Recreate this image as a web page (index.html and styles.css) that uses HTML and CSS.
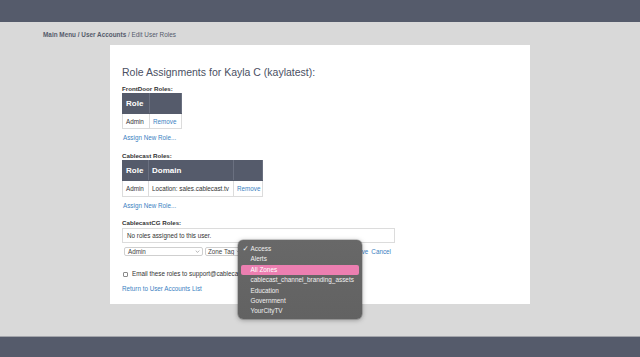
FILE: index.html
```html
<!DOCTYPE html>
<html lang="en">
<head>
<meta charset="utf-8">
<title>Edit User Roles</title>
<link rel="stylesheet" href="styles.css">
</head>
<body>
<div class="page">
  <header class="topbar"></header>
  <main class="main">
    <nav class="crumbs"><b>Main Menu / User Accounts</b> / Edit User Roles</nav>
    <section class="panel">
      <h1 class="title">Role Assignments for Kayla C (kaylatest):</h1>

      <div class="label">FrontDoor Roles:</div>
      <table class="roles t1">
        <colgroup><col class="w-role"><col class="w-act1"></colgroup>
        <thead><tr><th>Role</th><th></th></tr></thead>
        <tbody><tr><td>Admin</td><td><a class="link">Remove</a></td></tr></tbody>
      </table>
      <a class="link assign">Assign New Role...</a>

      <div class="label gap-l">Cablecast Roles:</div>
      <table class="roles t2">
        <colgroup><col class="w-role2"><col class="w-domain"><col class="w-act2"></colgroup>
        <thead><tr><th>Role</th><th>Domain</th><th></th></tr></thead>
        <tbody><tr><td>Admin</td><td>Location: sales.cablecast.tv</td><td><a class="link">Remove</a></td></tr></tbody>
      </table>
      <a class="link assign">Assign New Role...</a>

      <div class="label gap-m">CablecastCG Roles:</div>
      <div class="empty">No roles assigned to this user.</div>

      <div class="controls">
        <div class="select s-role"><span>Admin</span><svg class="chev" viewBox="0 0 8 5"><path d="M1 1 L4 4 L7 1" fill="none" stroke="#888" stroke-width="1"/></svg></div>
        <div class="select s-type"><span>Zone Tag</span><svg class="chev" viewBox="0 0 8 5"><path d="M1 1 L4 4 L7 1" fill="none" stroke="#888" stroke-width="1"/></svg></div>
        <div class="select s-zone"></div>
        <a class="link">Save</a>
        <a class="link">Cancel</a>
      </div>

      <label class="email"><span class="box"></span>Email these roles to support@cablecast.tv</label>

      <a class="link back">Return to User Accounts List</a>

      <ul class="menu">
        <li><span class="check">✓</span>Access</li>
        <li>Alerts</li>
        <li class="hl">All Zones</li>
        <li>cablecast_channel_branding_assets</li>
        <li>Education</li>
        <li>Government</li>
        <li>YourCityTV</li>
      </ul>
    </section>
  </main>
  <footer class="bottombar"></footer>
</div>
</body>
</html>
```

FILE: styles.css
```css
* { box-sizing: border-box; }
html, body { margin: 0; padding: 0; }
body {
  font-family: "Liberation Sans", Arial, Helvetica, sans-serif;
  color: #333;
  background: #d9d9d9;
}
.page {
  height: 357px;
  display: flex;
  flex-direction: column;
  overflow: hidden;
}
.topbar {
  height: 22px;
  background: #555b6b;
  flex: none;
}
.main {
  flex: 1;
  background: #d9d9d9;
}
.bottombar {
  height: 21px;
  flex: none;
  background: #555b6b;
  border-top: 1px solid #a3a5ab;
}
.crumbs {
  margin: 9px 0 0 43px;
  font-size: 6.4px;
  line-height: 8px;
  color: #555b6b;
}
.crumbs b { font-weight: bold; }

.panel {
  position: relative;
  margin: 6px 0 0 110px;
  width: 420px;
  height: 259px;
  background: #fff;
  padding: 21px 12px 0 12px;
  display: flex;
  flex-direction: column;
  align-items: flex-start;
}
.title {
  margin: 0;
  font-size: 10.5px;
  line-height: 13px;
  font-weight: normal;
  color: #4a5063;
}
.label {
  margin-top: 6px;
  font-size: 6.2px;
  line-height: 8px;
  font-weight: bold;
  color: #333;
}
.gap-l { margin-top: 10px; }
.gap-m { margin-top: 9px; }

.roles {
  border-collapse: collapse;
  table-layout: fixed;
  font-size: 6.3px;
}
.t1 { width: 59px; }
.t2 { width: 140px; }
.w-role { width: 27px; }
.w-act1 { width: 32px; }
.w-role2 { width: 26px; }
.w-domain { width: 85px; }
.w-act2 { width: 29px; }
.roles th {
  background: #555b6b;
  color: #fff;
  font-size: 8px;
  font-weight: bold;
  text-align: left;
  padding: 0 3px;
  height: 20px;
  border: 1px solid #555b6b;
  border-right-color: #6a7080;
}
.roles td {
  border: 1px solid #dcdcdc;
  padding: 0 3px;
  height: 15px;
  white-space: nowrap;
  color: #333;
}
.t2 td { height: 16px; }

.link {
  color: #3b7fc2;
  text-decoration: none;
  font-size: 6.3px;
  white-space: nowrap;
}
.assign {
  display: block;
  margin-top: 5px;
  margin-left: 1px;
  line-height: 8px;
}

.empty {
  margin-top: 1px;
  width: 273px;
  height: 15px;
  border: 1px solid #dcdcdc;
  padding-left: 4px;
  font-size: 6.3px;
  line-height: 13px;
  color: #333;
}

.controls {
  margin-top: 3px;
  margin-left: 2px;
  display: flex;
  align-items: center;
  gap: 2px;
  height: 10px;
}
.controls .link { margin-left: 1px; }
.select {
  flex: none;
  height: 9px;
  border: 1px solid #cfcfcf;
  border-radius: 2px;
  background: #fff;
  display: flex;
  align-items: center;
  justify-content: space-between;
  padding: 0 2px 0 3px;
  font-size: 6.3px;
  color: #444;
  white-space: nowrap;
  overflow: hidden;
}
.chev { width: 5px; height: 3px; flex: none; }
.s-role { width: 79px; }
.s-type { width: 40px; justify-content: flex-start; gap: 1.5px; padding-left: 2px; }
.s-zone { width: 104px; }

.email {
  margin-top: 14px;
  display: flex;
  align-items: center;
  gap: 4px;
  font-size: 6.3px;
  line-height: 8px;
  color: #333;
  white-space: nowrap;
}
.box {
  width: 5px;
  height: 5px;
  border: 1px solid #8a8a8a;
  border-radius: 1px;
  background: #fff;
  margin-left: 1px;
}
.back {
  display: block;
  margin-top: 7px;
  line-height: 8px;
}

.menu {
  position: absolute;
  left: 128px;
  top: 195px;
  width: 124px;
  height: 79px;
  margin: 0;
  padding: 4px 3px 2px 3px;
  list-style: none;
  background: linear-gradient(#686868, #626262);
  border-radius: 5px;
  box-shadow: 0 1px 5px rgba(0,0,0,0.35), 0 0 0 0.5px rgba(0,0,0,0.3);
  color: #f0f0f0;
  font-size: 6.4px;
}
.menu li {
  height: 10.4px;
  line-height: 10.4px;
  padding-left: 9.5px;
  border-radius: 2px;
  position: relative;
  white-space: nowrap;
}
.menu li.hl {
  background: #ec7fb1;
  color: #fff;
}
.check {
  position: absolute;
  left: 1.5px;
  top: 0;
  font-size: 7.5px;
  font-family: "DejaVu Sans", sans-serif;
}
```
